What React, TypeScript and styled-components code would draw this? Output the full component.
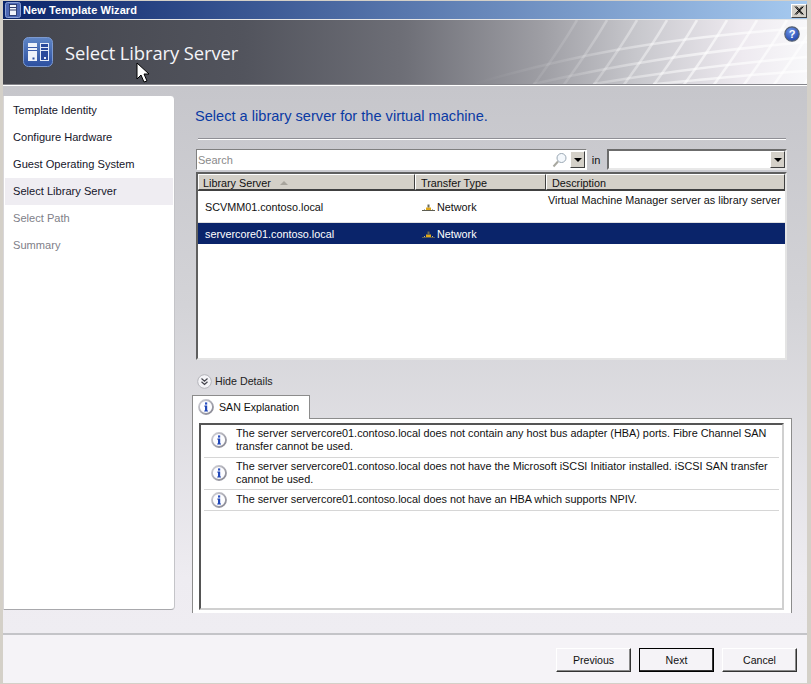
import React from "react";
import styled, { createGlobalStyle } from "styled-components";

const Global = createGlobalStyle`
  html, body { margin: 0; padding: 0; background: #d4d0c8; }
  * { box-sizing: border-box; }
`;

const UI = `"Liberation Sans", Arial, sans-serif`;

const Win = styled.div`
  position: relative;
  width: 811px;
  height: 684px;
  padding: 1px 4px 1px 3px;
  background: #d4d0c8;
  display: flex;
  flex-direction: column;
  font-family: ${UI};
  font-size: 11px;
  color: #111;
  overflow: hidden;
`;

const TitleBar = styled.div`
  height: 18px;
  flex: none;
  background: linear-gradient(90deg, #0a246a 0%, #a6caf0 100%);
  display: flex;
  align-items: center;
  gap: 2px;
  padding: 0 0 0 2px;
  color: #fff;
  font-weight: bold;
  font-size: 11px;
`;
const TitleText = styled.span`
  flex: 1;
  letter-spacing: 0.1px;
`;
const CloseBtn = styled.div`
  width: 16px;
  height: 14px;
  margin-top: 1px;
  background: #d4d0c8;
  border: 1px solid;
  border-color: #fff #404040 #404040 #fff;
  display: flex;
  align-items: center;
  justify-content: center;
`;

const Header = styled.div`
  position: relative;
  flex: none;
  height: 66px;
  border-top: 1px solid #e6e6e6;
  border-bottom: 1px solid #85858b;
  background: linear-gradient(90deg, #43454d 0%, #52545d 30%, #6e6f77 50%, #9e9ea4 67%, #c8c8cd 79%, #eeeaf0 92%, #f8f8fa 100%);
  display: flex;
  align-items: center;
  padding-left: 20px;
  gap: 12px;
  overflow: hidden;
`;
const HeaderMesh = styled.svg`
  position: absolute;
  left: 0;
  top: 0;
`;
const HeaderTitle = styled.h1`
  position: relative;
  margin: 1px 0 0;
  font-family: "Open Sans", "Noto Sans", sans-serif;
  font-weight: 400;
  font-size: 18.4px;
  color: #f4f4f8;
  letter-spacing: -0.1px;
`;
const HelpIcon = styled.svg`
  position: absolute;
  right: 7px;
  top: 6px;
`;

const Body = styled.div`
  flex: 1;
  min-height: 0;
  display: flex;
  align-items: flex-start;
  padding-top: 10px;
  border-top: 1px solid #fff;
  background: linear-gradient(180deg, #c6c6cb 0%, #d3d3d7 40%, #eeecf1 90%, #efedf2 100%);
`;

const Sidebar = styled.nav`
  width: 172px;
  height: 514px;
  flex: none;
  margin-right: 17px;
  background: #fff;
  border-left: 1px solid #d8d6d8;
  border-bottom: 1px solid #a8a8ac;
  border-right: 1px solid #c4c4c8;
  border-radius: 0 4px 4px 0;
  padding: 1px 1px 0 1px;
`;
const Step = styled.div<{ $active?: boolean; $disabled?: boolean }>`
  height: 27px;
  padding: 0 0 1px 8px;
  display: flex;
  align-items: center;
  background: ${(p) => (p.$active ? "#efedf2" : "transparent")};
  color: ${(p) => (p.$disabled ? "#808088" : "#15152a")};
  font-size: 11.1px;
`;

const Main = styled.div`
  width: 600px;
  flex: none;
  display: flex;
  flex-direction: column;
`;
const Heading = styled.h2`
  margin: 0 0 0 3px;
  height: 42px;
  padding-top: 11px;
  font-weight: 400;
  font-size: 14.6px;
  line-height: 18px;
  color: #0a3aa4;
`;
const Rule = styled.div`
  height: 2px;
  margin: 0 6px 0 6px;
  border-top: 1px solid #8f8f95;
  border-bottom: 1px solid #fff;
`;

const SearchRow = styled.div`
  display: flex;
  align-items: center;
  margin: 9px 5px 0 4px;
  height: 21px;
`;
const SearchBox = styled.div`
  width: 391px;
  height: 21px;
  background: #fff;
  border: 1px solid;
  border-color: #808080 #fff #fff #808080;
  display: flex;
  align-items: center;
  padding: 1px 1px 1px 1px;
  color: #8a8a8a;
  font-size: 11px;
`;
const SearchLabel = styled.span`
  flex: 1;
`;
const InLabel = styled.span`
  width: 20px;
  padding-right: 2px;
  text-align: center;
  color: #111;
  font-size: 11px;
`;
const ComboBox = styled.div`
  flex: 1;
  height: 21px;
  background: #fff;
  border: 2px solid;
  border-color: #6c6c6c #e8e8e8 #e8e8e8 #6c6c6c;
  display: flex;
  justify-content: flex-end;
`;
const ArrowBtn = styled.div`
  width: 15px;
  height: 17px;
  background: #d4d0c8;
  border: 1px solid;
  border-color: #fff #404040 #404040 #fff;
  display: flex;
  align-items: center;
  justify-content: center;
`;
const ArrowGlyph = styled.span`
  width: 0;
  height: 0;
  border: 4px solid transparent;
  border-top: 4px solid #000;
  border-bottom: 0;
`;

const List = styled.div`
  margin: 2px 5px 0 4px;
  height: 188px;
  background: #fff;
  border: 2px solid;
  border-color: #5f5f5f #e4e4e4 #e4e4e4 #5f5f5f;
`;
const ListHead = styled.div`
  display: grid;
  grid-template-columns: 217px 131px 1fr;
  height: 17px;
  border-bottom: 1px solid #404040;
`;
const HeadCell = styled.div<{ $first?: boolean }>`
  background: #d4d0c8;
  border: 1px solid;
  border-color: #fff #404040 #404040 #fff;
  padding: 1px 0 0 ${(p) => (p.$first ? "4px" : "5px")};
  display: flex;
  align-items: center;
  gap: 9px;
  color: #111;
  font-size: 10.8px;
`;
const SortArrow = styled.span`
  width: 0;
  height: 0;
  border: 4px solid transparent;
  border-bottom: 4px solid #a8a49c;
  border-top: 0;
`;
const ListRow = styled.div<{ $selected?: boolean; $tall?: boolean }>`
  display: grid;
  grid-template-columns: 217px 131px 1fr;
  height: ${(p) => (p.$tall ? "32px" : "21px")};
  background: ${(p) => (p.$selected ? "#0a246a" : "#fff")};
  color: ${(p) => (p.$selected ? "#fff" : "#111")};
  border-bottom: ${(p) => (p.$tall ? "1px solid #e0e0e0" : "0")};
`;
const Cell = styled.div`
  padding-left: 7px;
  display: flex;
  align-items: center;
  font-size: 10.8px;
  gap: 2px;
`;
const DescCell = styled.div`
  padding: 2px 0 0 2px;
  font-size: 10.8px;
  line-height: 14px;
  white-space: nowrap;
`;

const DetailsToggle = styled.div`
  margin: 11px 0 0 5px;
  height: 20px;
  display: flex;
  align-items: center;
  gap: 3px;
  font-size: 10.7px;
  color: #222;
`;
const Tab = styled.div`
  margin-top: 4px;
  width: 118px;
  height: 24px;
  background: #fff;
  border: 1px solid #8c8c8c;
  border-bottom: 0;
  display: flex;
  align-items: center;
  padding: 0 0 1px 5px;
  gap: 5px;
  position: relative;
  z-index: 1;
  font-size: 10.6px;
`;
const TabPanel = styled.div`
  margin-top: -1px;
  height: 195px;
  background: #fff;
  border-top: 1px solid #8c8c8c;
  border-left: 1px solid #8c8c8c;
  border-right: 1px solid #8c8c8c;
  padding: 4px 7px 4px 6px;
`;
const MessageBox = styled.div`
  height: 187px;
  border: 2px solid;
  border-color: #555 #d0d0d0 #d0d0d0 #555;
  padding: 0 3px;
`;
const Message = styled.div<{ $h: number; $lift: number }>`
  height: ${(p) => p.$h}px;
  border-bottom: 1px solid #d6d6d6;
  display: flex;
  align-items: center;
  gap: 9px;
  padding: 0 0 ${(p) => p.$lift}px 7px;
  font-size: 10.85px;
  line-height: 13px;
  color: #111;
`;

const Footer = styled.div`
  flex: none;
  height: 50px;
  border-top: 2px solid #c4c4c8;
  background: #f5f3f7;
  display: flex;
  justify-content: flex-end;
  align-items: flex-start;
  gap: 8px;
  padding: 13px 10px 0 0;
`;
const Button = styled.div<{ $default?: boolean }>`
  width: 75px;
  height: 24px;
  background: #f5f3f7;
  border: 1px solid;
  border-color: ${(p) => (p.$default ? "#000" : "#fff #333 #333 #fff")};
  box-shadow: ${(p) => (p.$default ? "inset -1px -1px 0 #333" : "inset -1px -1px 0 #8a8a8a")};
  display: flex;
  align-items: center;
  justify-content: center;
  color: #111;
  font-size: 10.6px;
`;

const Cursor = styled.svg`
  position: absolute;
  left: 136px;
  top: 62px;
`;

const InfoIcon = () => (
  <svg width={16} height={16} viewBox="0 0 16 16" style={{ flex: "none" }}>
    <defs>
      <linearGradient id="ring" x1="0" y1="0" x2="1" y2="1">
        <stop offset="0" stopColor="#d4d4da" />
        <stop offset="1" stopColor="#82828e" />
      </linearGradient>
    </defs>
    <circle cx="8" cy="8" r="7" fill="#fdfdff" stroke="url(#ring)" strokeWidth="1.8" />
    <rect x="7" y="3.4" width="2.2" height="2.2" fill="#2a50c0" />
    <path d="M6.4 6.6H9.2V11.4H10V12.6H6.2V11.4H7V7.8H6.4Z" fill="#2248b8" />
  </svg>
);

const NetworkIcon = () => (
  <svg width="13" height="9" viewBox="0 0 13 9" style={{ flex: "none" }}>
    <path d="M0 8.5H13" stroke="#5e5e52" strokeWidth="1" />
    <path d="M4 8V5.5H9V8Z" fill="#e0a818" />
    <rect x="5.5" y="2.5" width="2" height="3" fill="#6a6a5a" />
    <rect x="2" y="7" width="1" height="1" fill="#b8b4a0" />
    <rect x="10" y="7" width="1" height="1" fill="#b8b4a0" />
  </svg>
);

const meshArcs = [
  "M470 64C560 38 650 18 804 8",
  "M530 64C610 46 690 32 804 22",
  "M590 64C650 54 720 44 804 37",
  "M650 64C700 60 750 54 804 51",
];
const meshRays = Array.from({ length: 11 }, (_, i) => {
  const x = 530 + i * 30;
  return `M${x} 66C${x + 16} 44 ${x + 30} 24 ${x + 44} 0`;
});

export default function App() {
  return (
    <Win>
      <Global />
      <TitleBar>
        <svg width="16" height="16" viewBox="0 0 16 16" style={{ flex: "none" }}>
          <rect x="0.5" y="0.5" width="15" height="15" rx="2" fill="#4e68b4" stroke="#8aa0d4" />
          <rect x="4.5" y="2.5" width="7" height="11" fill="#f0f3fa" stroke="#16265c" strokeWidth="0.8" />
          <path d="M5 5.5H11M5 8H11" stroke="#16265c" strokeWidth="0.9" />
        </svg>
        <TitleText>New Template Wizard</TitleText>
        <CloseBtn>
          <svg width="10" height="9" viewBox="0 0 10 9">
            <path d="M1 0.5L8 8.5M2.4 0.5L9.4 8.5M8 0.5L1 8.5M9.4 0.5L2.4 8.5" stroke="#000" strokeWidth="1" fill="none" />
          </svg>
        </CloseBtn>
      </TitleBar>

      <Header>
        <HeaderMesh width="804" height="64" viewBox="0 0 804 64">
          <defs>
            <linearGradient id="meshFade" gradientUnits="userSpaceOnUse" x1="470" y1="0" x2="700" y2="0">
              <stop offset="0" stopColor="#fff" stopOpacity="0" />
              <stop offset="0.4" stopColor="#fff" stopOpacity="0.12" />
              <stop offset="1" stopColor="#fff" stopOpacity="0.6" />
            </linearGradient>
          </defs>
          <g fill="none" stroke="url(#meshFade)" strokeWidth="2.5">
            {meshArcs.map((d) => <path key={d} d={d} />)}
            {meshRays.map((d) => <path key={d} d={d} />)}
          </g>
        </HeaderMesh>
        <svg width="30" height="30" viewBox="0 0 30 30" style={{ position: "relative", flex: "none" }}>
          <defs>
            <linearGradient id="tile" x1="0" y1="0" x2="0" y2="1">
              <stop offset="0" stopColor="#5f86c6" />
              <stop offset="1" stopColor="#2c4fa0" />
            </linearGradient>
          </defs>
          <rect x="0.5" y="0.5" width="29" height="29" rx="5" fill="url(#tile)" stroke="#7d9ad0" />
          <rect x="5" y="6" width="9" height="18" fill="#eef2fa" />
          <path d="M5 10.5H14M5 13.5H14" stroke="#3a5aa8" />
          <rect x="9.5" y="20.5" width="2" height="2" fill="#2c4fa0" />
          <rect x="17.5" y="6.5" width="8" height="17" fill="#2a4a9c" stroke="#e6ecf8" />
          <path d="M17.5 10.5H25.5M17.5 13.5H25.5" stroke="#e6ecf8" />
          <rect x="21" y="20" width="2" height="2" fill="#e6ecf8" />
        </svg>
        <HeaderTitle>Select Library Server</HeaderTitle>
        <HelpIcon width="16" height="16" viewBox="0 0 16 16">
          <defs>
            <radialGradient id="help" cx="0.4" cy="0.3" r="0.8">
              <stop offset="0" stopColor="#6d94e6" />
              <stop offset="1" stopColor="#1a3ea8" />
            </radialGradient>
          </defs>
          <circle cx="8" cy="8" r="7.2" fill="url(#help)" stroke="#55606f" strokeWidth="1.2" />
          <text x="8" y="12" textAnchor="middle" fontFamily="Liberation Sans, sans-serif" fontWeight="bold" fontSize="11" fill="#fff">?</text>
        </HelpIcon>
      </Header>

      <Body>
        <Sidebar>
          <Step>Template Identity</Step>
          <Step>Configure Hardware</Step>
          <Step>Guest Operating System</Step>
          <Step $active>Select Library Server</Step>
          <Step $disabled>Select Path</Step>
          <Step $disabled>Summary</Step>
        </Sidebar>
        <Main>
          <Heading>Select a library server for the virtual machine.</Heading>
          <Rule />
          <SearchRow>
            <SearchBox>
              <SearchLabel>Search</SearchLabel>
              <svg width="16" height="16" viewBox="0 0 16 16" style={{ flex: "none", marginRight: 2 }}>
                <circle cx="9.5" cy="6" r="4.5" fill="#f4f8fc" stroke="#9aa8b4" />
                <path d="M6 9.5L1.5 14.5" stroke="#a8a8a0" strokeWidth="2" />
              </svg>
              <ArrowBtn><ArrowGlyph /></ArrowBtn>
            </SearchBox>
            <InLabel>in</InLabel>
            <ComboBox>
              <ArrowBtn><ArrowGlyph /></ArrowBtn>
            </ComboBox>
          </SearchRow>
          <List>
            <ListHead>
              <HeadCell $first>Library Server<SortArrow /></HeadCell>
              <HeadCell>Transfer Type</HeadCell>
              <HeadCell>Description</HeadCell>
            </ListHead>
            <ListRow $tall>
              <Cell>SCVMM01.contoso.local</Cell>
              <Cell><NetworkIcon />Network</Cell>
              <DescCell>Virtual Machine Manager server as library server</DescCell>
            </ListRow>
            <ListRow $selected>
              <Cell>servercore01.contoso.local</Cell>
              <Cell><NetworkIcon />Network</Cell>
              <DescCell />
            </ListRow>
          </List>
          <DetailsToggle>
            <svg width="15" height="15" viewBox="0 0 15 15" style={{ flex: "none" }}>
              <circle cx="7.5" cy="7.5" r="6.8" fill="#f4f4f7" stroke="#b4b4ba" />
              <path d="M4.5 4.5L7.5 7.2L10.5 4.5M4.5 7.8L7.5 10.5L10.5 7.8" fill="none" stroke="#44444c" strokeWidth="1.2" />
            </svg>
            Hide Details
          </DetailsToggle>
          <Tab><InfoIcon />SAN Explanation</Tab>
          <TabPanel>
            <MessageBox>
              <Message $h={33} $lift={2}>
                <InfoIcon />
                <span>The server servercore01.contoso.local does not contain any host bus adapter (HBA) ports. Fibre Channel SAN<br />transfer cannot be used.</span>
              </Message>
              <Message $h={32} $lift={1}>
                <InfoIcon />
                <span>The server servercore01.contoso.local does not have the Microsoft iSCSI Initiator installed. iSCSI SAN transfer<br />cannot be used.</span>
              </Message>
              <Message $h={21} $lift={1}>
                <InfoIcon />
                <span>The server servercore01.contoso.local does not have an HBA which supports NPIV.</span>
              </Message>
            </MessageBox>
          </TabPanel>
        </Main>
      </Body>

      <Footer>
        <Button>Previous</Button>
        <Button $default>Next</Button>
        <Button>Cancel</Button>
      </Footer>

      <Cursor width="14" height="22" viewBox="0 0 14 22">
        <path d="M1 1V17L5 13L8 20L11 19L8 12H13Z" fill="#fff" stroke="#000" strokeWidth="1" />
      </Cursor>
    </Win>
  );
}
